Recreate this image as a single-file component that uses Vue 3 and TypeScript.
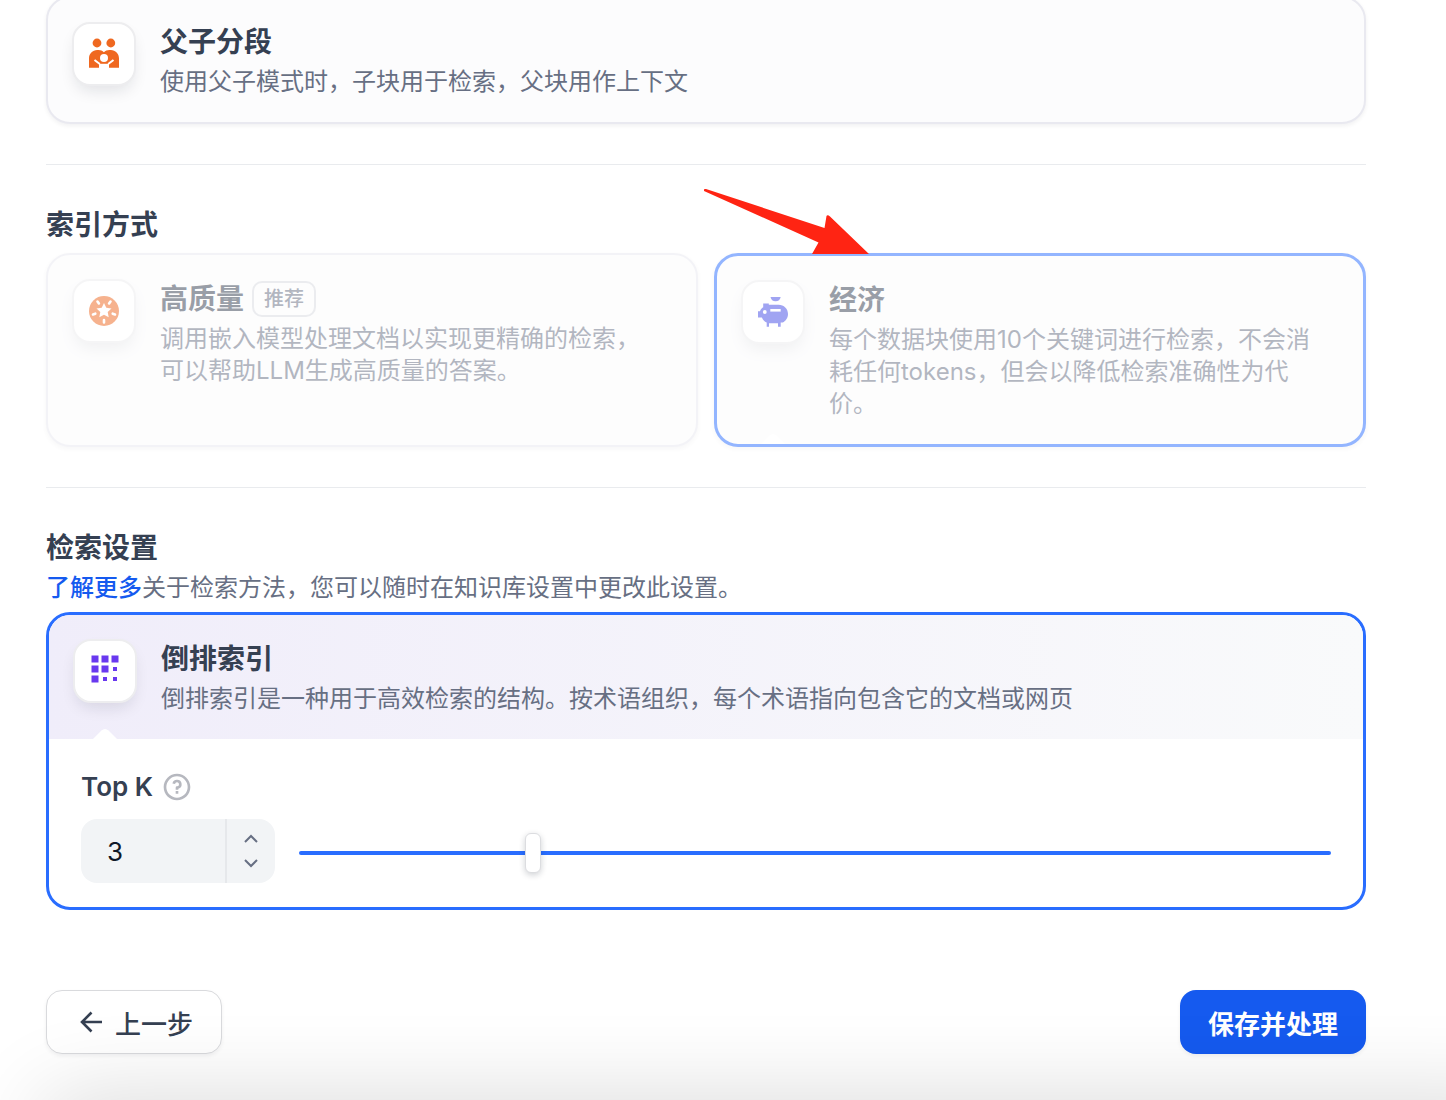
<script setup lang="ts">
import { ref } from 'vue'

const min = 1
const max = 10
const topK = ref<number>(3)

function step(delta: number): void {
  topK.value = Math.min(max, Math.max(min, topK.value + delta))
}
</script>

<template>
  <main class="page" lang="zh-CN">
    <button type="button" class="card chunk">
      <span class="icon-box">
        <svg viewBox="0 0 40 40" aria-hidden="true">
          <g fill="#ef6820">
            <circle cx="13" cy="9" r="4.4" />
            <circle cx="26.8" cy="9" r="4.4" />
            <path d="M5 33.7V24.5C5 19.6 8.6 16 13.2 16h1.4c2 0 3.8.8 5.3 2.3C21.400 16.800 23.200 16 25.400 16h1.400C31.400 16 35 19.600 35 24.500v9.200H25V30H15v3.700Z" />
          </g>
          <circle cx="20" cy="24" r="4" fill="#fff" />
          <path d="m10.500 26 5.300 4M29.500 26l-5.300 4" fill="none" stroke="#fff" stroke-width="2" />
          <path d="M15 29.800h10v4H15z" fill="#fff" />
        </svg>
      </span>
      <span class="copy">
        <span class="title">父子分段</span>
        <span class="desc">使用父子模式时，子块用于检索，父块用作上下文</span>
      </span>
    </button>

    <hr class="rule" />

    <section class="index">
      <h2 class="title">索引方式</h2>
      <div class="options">
        <button type="button" class="card faded" disabled>
          <span class="icon-box">
            <svg viewBox="0 0 40 40" aria-hidden="true">
              <circle cx="20" cy="20" r="15" fill="#ef6820" />
              <path d="m20 12 2.300 4.800 5.200.7-3.800 3.600 1 5.200-4.700-2.500-4.700 2.500 1-5.200-3.800-3.600 5.200-.7Z" fill="#fff" />
              <path d="m13.500 10.500 1.400 2M26.500 10.500l-1.400 2M9 23.500l2.300-.8M31 23.500l-2.300-.8M20 29v2.400" stroke="#fff" stroke-width="2.600" stroke-linecap="round" />
            </svg>
          </span>
          <span class="copy">
            <span class="title">高质量 <span class="badge">推荐</span></span>
            <span class="desc">调用嵌入模型处理文档以实现更精确的检索，可以帮助LLM生成高质量的答案。</span>
          </span>
        </button>
        <button type="button" class="card faded selected" disabled>
          <span class="icon-box">
            <svg viewBox="0 0 40 40" aria-hidden="true">
              <g fill="#444ce7">
                <path d="M17.500 5h10.200a5.200 5.200 0 0 1-10.200 0Z" />
                <path d="M10.200 11.500h5.600v1.200H25.500c5.400 0 9.500 4 9.500 9.300 0 3.800-2.200 7-5.300 8.600h-2v4.100H25v-3.400h-9v3.400h-2.300v-4.100c-2.400-1.200-4-2.800-4.800-5.100H5V19.200h2c.5-1.600 1.600-2.900 3.200-3.900Z" />
              </g>
              <circle cx="11.800" cy="20" r="1.900" fill="#fff" />
              <path d="M17.300 17h10.400v2.600H17.300z" fill="#fff" />
            </svg>
          </span>
          <span class="copy">
            <span class="title">经济</span>
            <span class="desc">每个数据块使用10个关键词进行检索，不会消耗任何tokens，但会以降低检索准确性为代价。</span>
          </span>
          <svg class="notch" viewBox="0 0 24 10" aria-hidden="true"><path d="M0 10 8.500 1.500q3.500-3 7 0L24 10Z" fill="#fff" /></svg>
        </button>
      </div>
      <svg class="pointer" viewBox="0 0 166 66" aria-hidden="true">
        <path d="M1 1q0-1.500 2-1L121.500 39l2-12q1-1.500 3.500.5L166 65H109l6.500-11.500L1 2Z" fill="#ff2413" />
      </svg>
    </section>

    <hr class="rule" />

    <section>
      <h2 class="title">检索设置</h2>
      <p class="desc intro"><a href="#">了解更多</a>关于检索方法，您可以随时在知识库设置中更改此设置。</p>
      <div class="panel">
        <header class="panel-head">
          <span class="icon-box">
            <svg viewBox="0 0 40 40" aria-hidden="true">
              <path d="M6.500 4.500h7v7h-7zM16.500 4.500h7v7h-7zM26.500 4.500h7v7h-7zM6.500 14.500h7v7h-7zM16.500 14.500h7v7h-7zM6.500 24.500h7v7h-7zM28 16h4v4h-4zM18 26h4v4h-4zM28 26h4v4h-4z" fill="#6938ef" />
            </svg>
          </span>
          <div class="copy">
            <h3 class="title">倒排索引</h3>
            <p class="desc">倒排索引是一种用于高效检索的结构。按术语组织，每个术语指向包含它的文档或网页</p>
          </div>
          <svg class="notch" viewBox="0 0 24 10" aria-hidden="true"><path d="M0 10 8.500 1.500q3.500-3 7 0L24 10Z" fill="#fff" /></svg>
        </header>
        <div class="panel-body">
          <div class="field-name">
            <label for="top-k">Top K</label>
            <svg viewBox="0 0 24 24" aria-hidden="true">
              <path fill="#b6b8bf" d="M12 22C6.477 22 2 17.523 2 12S6.477 2 12 2s10 4.477 10 10-4.477 10-10 10Zm0-2a8 8 0 1 0 0-16 8 8 0 0 0 0 16Zm-1-5h2v2h-2v-2Zm2-1.645V14h-2v-1.500a1 1 0 0 1 1-1 1.500 1.500 0 1 0-1.471-1.794l-1.962-.393A3.500 3.500 0 1 1 13 13.355Z" />
            </svg>
          </div>
          <div class="controls">
            <div class="number">
              <input id="top-k" v-model.number="topK" type="number" :min="min" :max="max" />
              <div class="steps">
                <button type="button" aria-label="增加" @click="step(1)">
                  <svg viewBox="0 0 16 16" aria-hidden="true"><path d="m2 11 6-6 6 6" /></svg>
                </button>
                <button type="button" aria-label="减少" @click="step(-1)">
                  <svg viewBox="0 0 16 16" aria-hidden="true"><path d="m2 5 6 6 6-6" /></svg>
                </button>
              </div>
            </div>
            <input v-model.number="topK" class="slider" type="range" :min="min" :max="max" aria-label="Top K" />
          </div>
        </div>
      </div>
    </section>

    <footer class="actions">
      <button type="button" class="btn">
        <svg viewBox="0 0 32 32" aria-hidden="true"><path d="M27 16H7M16.500 6.500 7 16l9.500 9.500" fill="none" stroke="#354052" stroke-width="2.600" /></svg>
        上一步
      </button>
      <button type="button" class="btn primary">保存并处理</button>
    </footer>
    <div class="shade"></div>
  </main>
</template>

<style>
body {
  margin: 0;
  background: #fff;
}
</style>

<style scoped>
* {
  box-sizing: border-box;
}
.page {
  position: relative;
  min-height: 100vh;
  padding: 0 80px 46px 46px;
  overflow: hidden;
  font-family: Inter, "Noto Sans CJK SC", sans-serif;
  color: #354052;
}
button,
input {
  font: inherit;
  color: inherit;
}
.title {
  display: flex;
  align-items: center;
  gap: 8px;
  margin: 0;
  font-size: 28px;
  font-weight: 600;
  line-height: 40px;
  color: #354052;
}
.desc {
  margin: 0;
  font-size: 24px;
  line-height: 32px;
  color: #676f83;
}
.copy {
  display: flex;
  flex: 1;
  flex-direction: column;
  gap: 4px;
}
.card {
  position: relative;
  display: flex;
  align-items: flex-start;
  gap: 24px;
  width: 100%;
  padding: 24px 40px 24px 24px;
  border: 2px solid #e9e9f0;
  border-radius: 24px;
  background: #fcfcfd;
  box-shadow: 0 2px 4px rgba(16, 24, 40, 0.06);
  text-align: left;
}
.chunk {
  margin-top: -4px;
}
.icon-box {
  display: flex;
  flex: none;
  align-items: center;
  justify-content: center;
  width: 64px;
  height: 64px;
  border: 2px solid #ededef;
  border-radius: 18px;
  background: #fff;
  box-shadow: 0 8px 16px -4px rgba(16, 24, 40, 0.12);
}
.icon-box svg {
  width: 40px;
  height: 40px;
}
.rule {
  height: 1px;
  margin: 40px 0;
  border: 0;
  background: #e9ebee;
}
.index {
  position: relative;
}
.options {
  display: grid;
  grid-template-columns: 1fr 1fr;
  gap: 16px;
  margin-top: 8px;
}
.faded {
  opacity: 0.5;
}
.selected {
  border: 3px solid #296dff;
}
.badge {
  height: 36px;
  padding: 0 10px;
  border: 2px solid #d9dbe0;
  border-radius: 10px;
  font-size: 20px;
  font-weight: 500;
  line-height: 32px;
  color: #676f83;
}
.notch {
  position: absolute;
  bottom: 0;
  left: 44px;
  width: 24px;
  height: 10px;
}
.pointer {
  position: absolute;
  top: -16px;
  left: calc(50% - 3px);
  width: 166px;
  height: 66px;
}
.intro {
  margin: 4px 0 8px;
}
.intro a {
  font-weight: 500;
  color: #155aef;
  text-decoration: none;
}
.panel {
  overflow: hidden;
  border: 3px solid #296dff;
  border-radius: 24px;
  background: #fff;
}
.panel-head {
  position: relative;
  display: flex;
  gap: 24px;
  padding: 24px;
  background: linear-gradient(90deg, #f0edfa, #f9fafb);
}
.panel-body {
  padding: 32px 32px 24px;
}
.field-name {
  display: flex;
  align-items: center;
  gap: 8px;
  margin-bottom: 16px;
  font-size: 26px;
  font-weight: 600;
  line-height: 32px;
}
.field-name svg {
  width: 32px;
  height: 32px;
}
.controls {
  display: flex;
  align-items: flex-end;
  gap: 24px;
}
.number {
  display: flex;
  width: 194px;
  height: 64px;
  overflow: hidden;
  border-radius: 16px;
  background: #f2f4f6;
}
.number input {
  flex: 1;
  min-width: 0;
  padding: 0 0 0 26px;
  border: 0;
  background: none;
  font-size: 26px;
  color: #101828;
  appearance: textfield;
}
.number input::-webkit-inner-spin-button {
  appearance: none;
}
.steps {
  display: flex;
  flex-direction: column;
  width: 50px;
  padding: 8px 0;
  border-left: 2px solid #e6e8eb;
}
.steps button {
  display: flex;
  flex: 1;
  align-items: center;
  justify-content: center;
  padding: 0;
  border: 0;
  background: none;
}
.steps svg {
  width: 16px;
  height: 16px;
  fill: none;
  stroke: #676f83;
  stroke-width: 2;
}
.slider {
  flex: 1;
  min-width: 0;
  height: 60px;
  margin: 0;
  background: none;
  appearance: none;
}
.slider::-webkit-slider-runnable-track {
  height: 4px;
  border-radius: 2px;
  background: #296dff;
}
.slider::-webkit-slider-thumb {
  width: 16px;
  height: 40px;
  margin-top: -18px;
  border: 1px solid #dcdde0;
  border-radius: 6px;
  background: #fff;
  box-shadow: 0 2px 6px rgba(16, 24, 40, 0.2);
  appearance: none;
}
.actions {
  display: flex;
  justify-content: space-between;
  margin-top: 80px;
}
.btn {
  display: flex;
  align-items: center;
  gap: 8px;
  height: 64px;
  padding: 0 28px;
  border: 1px solid #d9dadd;
  border-radius: 16px;
  background: #fff;
  box-shadow: 0 2px 4px rgba(16, 24, 40, 0.06);
  font-size: 26px;
  font-weight: 500;
}
.btn svg {
  width: 32px;
  height: 32px;
}
.primary {
  border: 0;
  background: #155aef;
  font-weight: 600;
  color: #fff;
}
.shade {
  position: absolute;
  top: 100%;
  right: -80px;
  left: 46px;
  height: 80px;
  box-shadow: 0 0 90px rgba(0, 0, 0, 0.16);
  pointer-events: none;
}
</style>
